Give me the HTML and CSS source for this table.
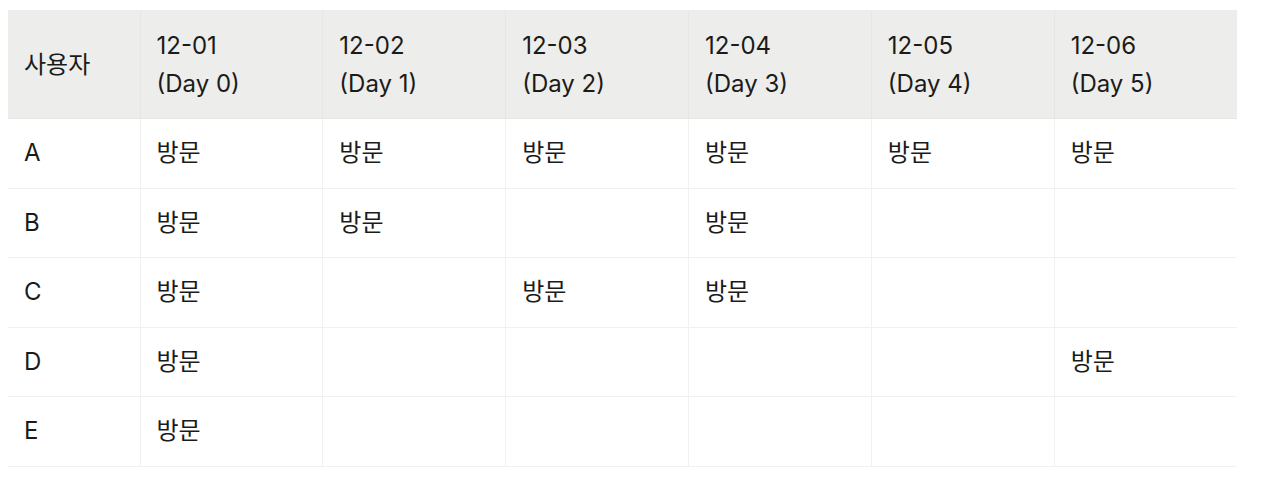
FILE: index.html
```html
<!DOCTYPE html>
<html lang="ko">
<head>
<meta charset="utf-8">
<link rel="stylesheet" href="styles.css">
</head>
<body>
<table class="grid">
  <colgroup>
    <col class="c-user">
    <col><col><col><col><col><col>
  </colgroup>
  <thead>
    <tr>
      <th>사용자</th>
      <th>12-01<br>(Day 0)</th>
      <th>12-02<br>(Day 1)</th>
      <th>12-03<br>(Day 2)</th>
      <th>12-04<br>(Day 3)</th>
      <th>12-05<br>(Day 4)</th>
      <th>12-06<br>(Day 5)</th>
    </tr>
  </thead>
  <tbody>
    <tr><td>A</td><td>방문</td><td>방문</td><td>방문</td><td>방문</td><td>방문</td><td>방문</td></tr>
    <tr><td>B</td><td>방문</td><td>방문</td><td></td><td>방문</td><td></td><td></td></tr>
    <tr><td>C</td><td>방문</td><td></td><td>방문</td><td>방문</td><td></td><td></td></tr>
    <tr><td>D</td><td>방문</td><td></td><td></td><td></td><td></td><td>방문</td></tr>
    <tr><td>E</td><td>방문</td><td></td><td></td><td></td><td></td><td></td></tr>
  </tbody>
</table>
</body>
</html>
```
FILE: styles.css
```css
html, body {
  margin: 0;
  padding: 0;
  background: #ffffff;
}
body {
  padding: 10px 0 0 8px;
  font-family: Inter, "Noto Sans CJK KR", sans-serif;
  color: #1b1b1a;
}
.grid {
  width: 1229px;
  border-collapse: collapse;
  table-layout: fixed;
  font-size: 24px;
}
.c-user {
  width: 132px;
}
.grid th,
.grid td {
  border: 1px solid #f1f1ef;
  padding: 16px 16px;
  text-align: left;
  vertical-align: top;
  font-weight: 400;
}
.grid td {
  line-height: 36.6px;
}
.grid thead th {
  line-height: 38px;
  padding-top: 17px;
  padding-bottom: 15px;
  background: #ededeb;
  border-color: #e6e6e4;
  border-top: none;
}
.grid th:first-child,
.grid td:first-child {
  border-left: none;
}
.grid thead th:first-child {
  vertical-align: middle;
}
.grid th:last-child,
.grid td:last-child {
  border-right: none;
}
```
